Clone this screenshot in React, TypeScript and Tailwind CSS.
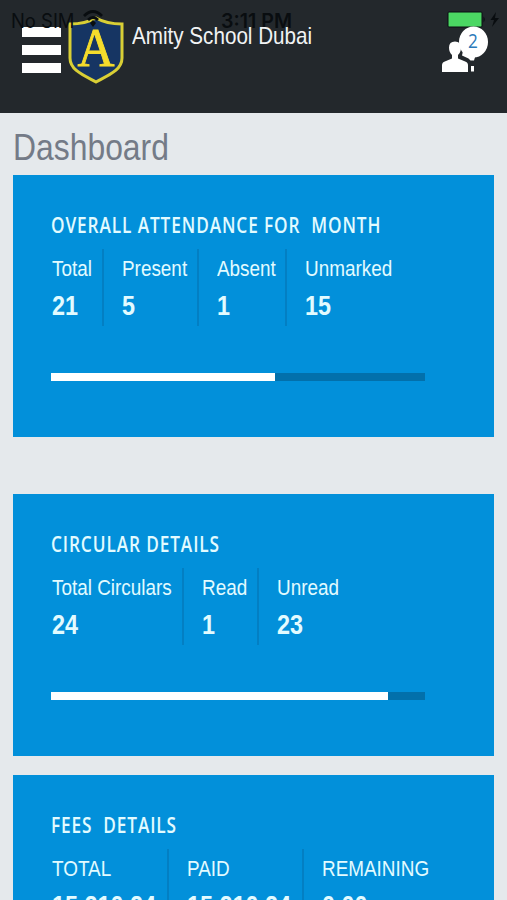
import React from 'react';

interface Stat {
  label: string;
  value: string;
  width: string;
}

interface StatCardProps {
  title: string;
  stats: Stat[];
  percent: number;
  className?: string;
}

const ATTENDANCE: Stat[] = [
  { label: 'Total', value: '21', width: 'w-[53px]' },
  { label: 'Present', value: '5', width: 'w-[95px]' },
  { label: 'Absent', value: '1', width: 'w-[88px]' },
  { label: 'Unmarked', value: '15', width: 'w-[130px]' },
];

const CIRCULARS: Stat[] = [
  { label: 'Total Circulars', value: '24', width: 'w-[133px]' },
  { label: 'Read', value: '1', width: 'w-[75px]' },
  { label: 'Unread', value: '23', width: 'w-[130px]' },
];

const FEES: Stat[] = [
  { label: 'TOTAL', value: '15,210.24', width: 'w-[118px]' },
  { label: 'PAID', value: '15,210.24', width: 'w-[135px]' },
  { label: 'REMAINING', value: '0.00', width: 'w-[150px]' },
];

const StatCard: React.FC<StatCardProps> = ({ title, stats, percent, className = '' }) => (
  <section className={`h-[262px] shrink-0 bg-[#0290da] px-[38px] pt-[38px] text-[#e2fbff] ${className}`}>
    <h2 className="h-6 origin-left scale-x-[.82] whitespace-pre font-['Open_Sans',sans-serif] text-[21px] leading-6 font-semibold tracking-[1.1px]">
      {title}
    </h2>
    <div className="mt-3 flex">
      {stats.map((stat, i) => (
        <div
          key={stat.label}
          className={`h-[77px] shrink-0 pt-2 ${stat.width} ${i > 0 ? 'pl-[17px]' : ''} ${
            i < stats.length - 1 ? 'border-r-2 border-[#037fc3]' : ''
          }`}
        >
          <p className="ml-[0.5px] origin-left scale-x-[.84] text-[22.5px] leading-6 whitespace-nowrap">{stat.label}</p>
          <p className="mt-[9px] ml-[0.5px] origin-left scale-x-[.835] text-[28px] leading-8 font-bold whitespace-nowrap">
            {stat.value}
          </p>
        </div>
      ))}
    </div>
    <div className="mt-[47px] h-2 w-[374px] bg-[#0270ab]">
      <div className="h-full bg-white" style={{ width: `${percent}%` }} />
    </div>
  </section>
);

const Crest = () => (
  <svg className="absolute top-[16px] left-[68px]" width="56" height="68" viewBox="0 0 56 68">
    <path
      d="M28 2 C21 6 11 8 2 8 V42 C2 54 15 59 28 66 C41 59 54 54 54 42 V8 C45 8 35 6 28 2 Z"
      fill="#163563"
      stroke="#d9cf35"
      strokeWidth="3"
    />
    <text
      x="28"
      y="49.5"
      textAnchor="middle"
      fontFamily="Liberation Serif, serif"
      fontSize="54"
      textLength="37"
      lengthAdjust="spacingAndGlyphs"
      fill="#f5dc2c"
      stroke="#f5dc2c"
      strokeWidth=".9"
    >
      A
    </text>
  </svg>
);

const StatusBar = () => (
  <div className="absolute inset-x-0 top-0 h-10 font-['Inter',sans-serif] text-[#090d10]">
    <span className="absolute top-[9px] left-[11px] origin-left scale-x-[.92] text-[20px] leading-6 whitespace-nowrap">
      No SIM
    </span>
    <svg className="absolute top-[10px] left-[83px]" width="20" height="17" viewBox="0 0 20 17">
      <path d="M1 6 Q10 -3 19 6 M5 10 Q10 5 15 10" fill="none" stroke="currentColor" strokeWidth="2.8" />
      <path d="M10 10 L13 13 L10 17 L7 13 Z" fill="currentColor" />
    </svg>
    <span className="absolute top-[9px] left-[221px] origin-left scale-x-[.98] text-[20px] leading-6 font-semibold whitespace-nowrap">
      3:11 PM
    </span>
    <svg className="absolute top-[10px] left-[447px]" width="56" height="20" viewBox="0 0 56 20">
      <rect x="1" y="2" width="34" height="15" rx="1" fill="#4bd763" stroke="currentColor" />
      <path d="M36.500 6.500 Q39 9.500 36.500 12.500 Z" fill="currentColor" />
      <path d="M49 2 L43.500 10 H47 L45 17 L52 8 H48 Z" fill="currentColor" />
    </svg>
  </div>
);

const Header = () => (
  <header className="relative h-[113px] shrink-0 bg-[#23282c]">
    <div className="absolute top-[27px] left-[22px] flex flex-col gap-[8px]">
      <span className="h-[10px] w-[39px] bg-white" />
      <span className="h-[10px] w-[39px] bg-white" />
      <span className="h-[10px] w-[39px] bg-white" />
    </div>
    <Crest />
    <StatusBar />
    <h1 className="absolute top-[22px] left-[132px] origin-left scale-x-[.86] text-[24px] leading-7 whitespace-nowrap text-[#f1f3f4]">
      Amity School Dubai
    </h1>
    <svg className="absolute top-[26px] left-[440px]" width="50" height="48" viewBox="0 0 50 48">
      <path
        d="M2 46 V39 Q2 36 6 35 L12 32.500 V29 Q9 26 9 21.500 Q9 15.500 15 15.500 Q21 15.500 21 21.500 Q21 26 18 29 V32.500 L24 35 Q28 36 28 39 V46 Z"
        fill="#fff"
      />
      <path d="M23 25 L36 28 L34 34.500 H30.500 L28.500 32.500 L22 29.500 Z M31 40 H34 V45.500 H31 Z" fill="#fff" />
      <ellipse cx="33.500" cy="16" rx="14.500" ry="15.500" fill="#fff" />
    </svg>
    <span className="absolute top-[29px] left-[464px] w-[18px] scale-x-[.86] text-center font-['Open_Sans',sans-serif] text-[20px] leading-6 text-[#2b79b9]">
      2
    </span>
  </header>
);

export default function App() {
  return (
    <div className="flex h-[900px] w-[507px] flex-col overflow-hidden bg-[#e5e9ec] font-['Liberation_Sans',sans-serif]">
      <Header />
      <main className="flex flex-col px-[13px] pt-[13px]">
        <h2 className="h-[49px] origin-left scale-x-[.85] text-[37.5px] leading-[43px] text-[#747b87]">Dashboard</h2>
        <StatCard title="OVERALL ATTENDANCE FOR  MONTH" stats={ATTENDANCE} percent={60} />
        <StatCard className="mt-[57px]" title="CIRCULAR DETAILS" stats={CIRCULARS} percent={90} />
        <StatCard className="mt-[19px]" title="FEES  DETAILS" stats={FEES} percent={100} />
      </main>
    </div>
  );
}
